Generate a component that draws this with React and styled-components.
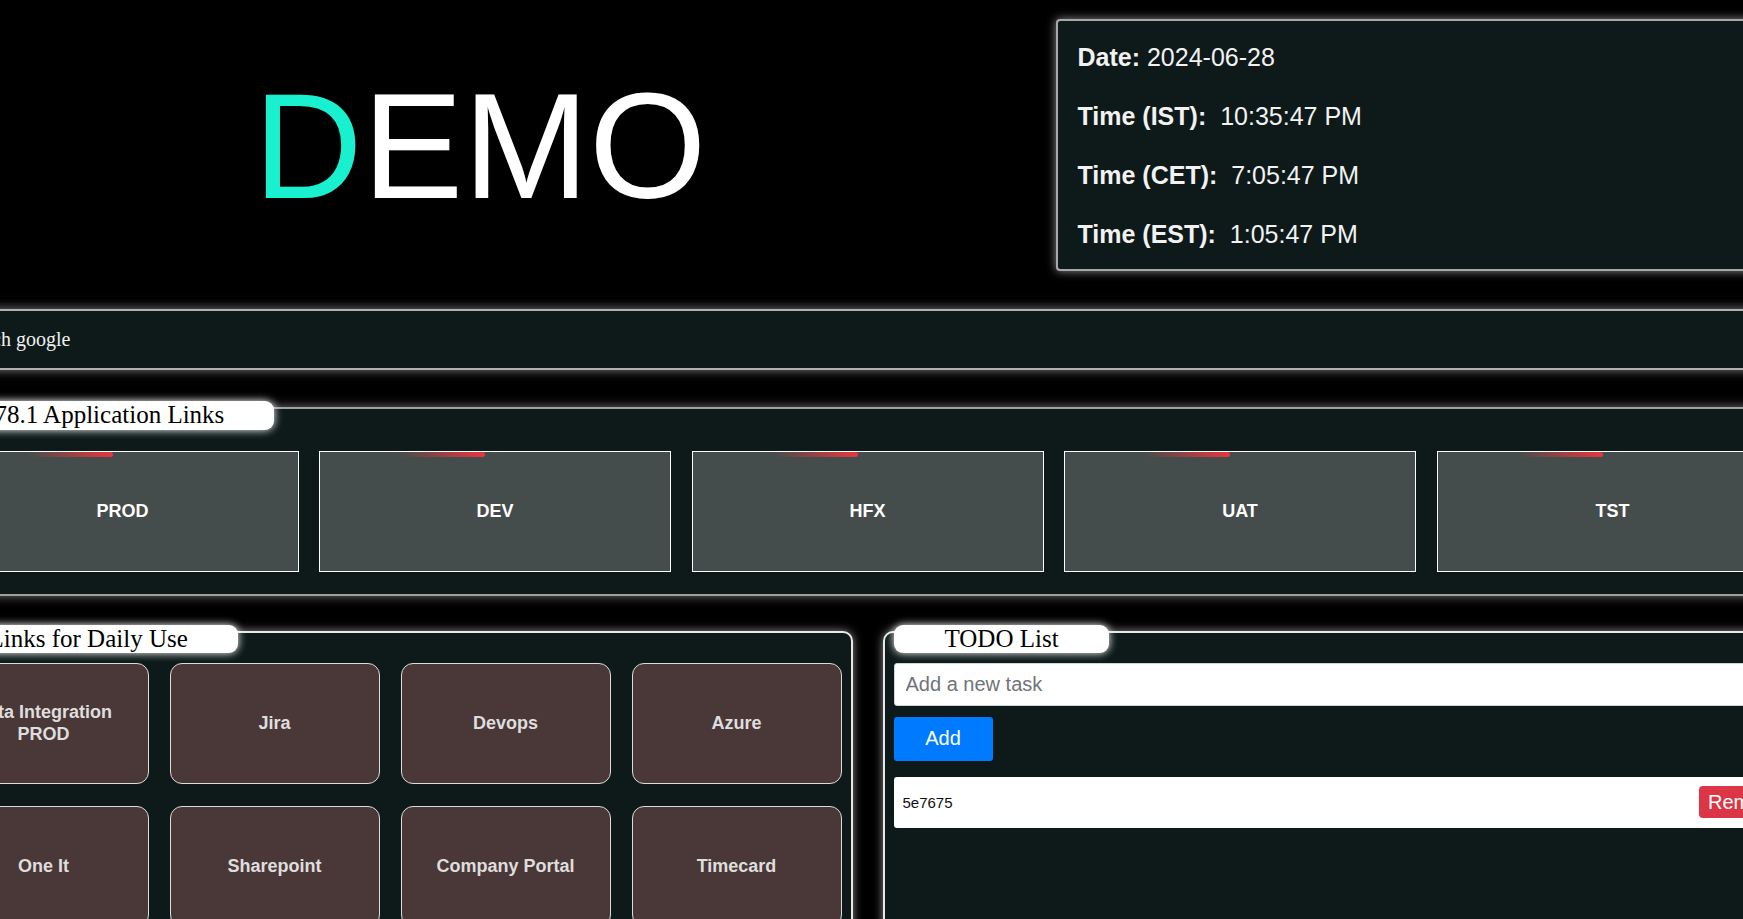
import React, { useState } from 'react';
import styled, { createGlobalStyle } from 'styled-components';

const GlobalStyle = createGlobalStyle`
body {
  margin: 0;
  background: #000;
  overflow-x: hidden;
  font-family: "Liberation Serif", serif;
}
`;

const Viewport = styled.div`
width: 100%;
display: flex;
justify-content: center;
overflow: hidden;
`;

const Page = styled.div`
width: 1888px;
flex-shrink: 0;
padding-top: 19px;
padding-bottom: 40px;
`;

const Header = styled.header`
display: grid;
grid-template-columns: 1105px 1fr;
column-gap: 23px;
align-items: center;
`;

const Title = styled.h1`
margin: 0;
text-align: center;
font-family: "Liberation Sans", Arial, sans-serif;
font-weight: 400;
font-size: 151px;
line-height: 1;
color: #fff;
`;

const Accent = styled.span`
color: #19f0d0;
`;

const Clock = styled.div`
background: #0e1a1a;
border: 2px solid #a8a8a8;
border-right: none;
border-radius: 4px 0 0 4px;
box-shadow: 0 0 10px rgba(255, 255, 255, 0.55);
padding: 22px 20px 21px;
display: flex;
flex-direction: column;
gap: 31px;
font-family: "Liberation Sans", Arial, sans-serif;
font-size: 25px;
color: #f2f2f2;
`;

const ClockRow = styled.div`
height: 28px;
line-height: 28px;
white-space: pre;
`;

const Label = styled.b`
font-weight: 700;
`;

const SearchBar = styled.div`
margin-top: 38px;
height: 57px;
display: flex;
align-items: center;
padding-left: 29px;
background: #0e1a1a;
border-top: 2px solid #b0b0b0;
border-bottom: 2px solid #b0b0b0;
box-shadow: 0 0 10px rgba(255, 255, 255, 0.5);
font-size: 20px;
color: #f0f0f0;
`;

const AppSection = styled.section`
margin-top: 37px;
padding: 0 19px 22px;
background: #0e1a1a;
border-top: 2px solid #a0a0a0;
border-bottom: 2px solid #a0a0a0;
box-shadow: 0 0 10px rgba(255, 255, 255, 0.45);
`;

const Legend = styled.div`
display: inline-flex;
align-items: center;
height: ${p => p.$h || 28}px;
margin: ${p => p.$top}px 0 ${p => p.$bottom}px ${p => p.$left}px;
padding: 0 50px 0 51px;
background: #fff;
border-radius: 9px;
box-shadow: 0 0 9px #fff;
font-family: "Liberation Serif", serif;
font-size: 25px;
color: #000;
white-space: nowrap;
`;

const CardRow = styled.div`
display: grid;
grid-template-columns: repeat(5, 352px);
gap: 20.5px;
`;

const EnvCard = styled.a`
position: relative;
height: 121px;
display: flex;
align-items: center;
justify-content: center;
background: #454d4c;
border: 1px solid #fff;
box-sizing: border-box;
font-family: "Liberation Sans", Arial, sans-serif;
font-weight: 700;
font-size: 18px;
color: #fff;
text-decoration: none;

&::before {
  content: '';
  position: absolute;
  top: 0;
  left: 80px;
  width: 85px;
  height: 5px;
  border-radius: 0 3px 3px 0;
  background: linear-gradient(to right, rgba(232, 58, 63, 0), #e8373c);
}
`;

const Lower = styled.div`
margin-top: 35px;
display: grid;
grid-template-columns: 925px 1fr;
column-gap: 30px;
`;

const Panel = styled.div`
min-height: 420px;
padding: 0 9px 10px;
background: #0e1a1a;
border: 2px solid #e8e8e8;
border-radius: 10px;
box-shadow: 0 0 10px rgba(255, 255, 255, 0.55);
`;

const TileGrid = styled.div`
display: grid;
grid-template-columns: repeat(4, 1fr);
gap: 22px 21px;
`;

const Tile = styled.a`
height: 121px;
display: flex;
align-items: center;
justify-content: center;
padding: 0 15px;
box-sizing: border-box;
text-align: center;
background: #4a3737;
border: 1px solid #dcdcdc;
border-radius: 12px;
font-family: "Liberation Sans", Arial, sans-serif;
font-weight: 700;
font-size: 18px;
line-height: 22px;
color: #dedede;
text-decoration: none;
`;

const TaskInput = styled.input`
display: block;
width: 100%;
height: 43px;
box-sizing: border-box;
padding: 0 11px;
border: 1px solid #ced4da;
border-radius: 3px;
background: #fff;
font-family: "Liberation Sans", Arial, sans-serif;
font-size: 20px;
outline: none;

&::placeholder {
  color: #6f7479;
}
`;

const AddButton = styled.button`
display: block;
margin-top: 11px;
width: 99px;
height: 44px;
border: none;
border-radius: 3px;
background: #007bff;
color: #fff;
font-family: "Liberation Sans", Arial, sans-serif;
font-size: 20px;
cursor: pointer;
`;

const TaskItem = styled.div`
margin-top: 16px;
height: 51px;
display: flex;
align-items: center;
justify-content: space-between;
padding: 0 13px 0 9px;
background: #fff;
border-radius: 3px;
`;

const TaskText = styled.span`
font-family: "Liberation Sans", Arial, sans-serif;
font-size: 15px;
color: #111;
`;

const RemoveButton = styled.button`
height: 32px;
padding: 0 9px;
border: none;
border-radius: 4px;
background: #dc3545;
color: #fff;
font-family: "Liberation Sans", Arial, sans-serif;
font-size: 20px;
cursor: pointer;
`;

const envs = ['PROD', 'DEV', 'HFX', 'UAT', 'TST'];

const daily = [
  'Data Integration PROD', 'Jira', 'Devops', 'Azure',
  'One It', 'Sharepoint', 'Company Portal', 'Timecard',
];

const App = () => {
  const [task, setTask] = useState('');
  const [tasks, setTasks] = useState(['5e7675']);

  const handleAdd = () => {
    if (!task.trim()) return;
    setTasks([...tasks, task.trim()]);
    setTask('');
  };

  const handleRemove = (i) => {
    setTasks(tasks.filter((_, idx) => idx !== i));
  };

  return (
    <Viewport>
      <GlobalStyle />
      <Page>
        <Header>
          <Title><Accent>D</Accent>EMO</Title>
          <Clock>
            <ClockRow><Label>Date:</Label> 2024-06-28</ClockRow>
            <ClockRow><Label>Time (IST):</Label>{'  '}10:35:47 PM</ClockRow>
            <ClockRow><Label>Time (CET):</Label>{'  '}7:05:47 PM</ClockRow>
            <ClockRow><Label>Time (EST):</Label>{'  '}1:05:47 PM</ClockRow>
          </Clock>
        </Header>

        <SearchBar>Search google</SearchBar>

        <AppSection>
          <Legend $top={-10} $bottom={21} $left={-3} $h={29}>78.1 Application Links</Legend>
          <CardRow>
            {envs.map(e => <EnvCard key={e} href="#">{e}</EnvCard>)}
          </CardRow>
        </AppSection>

        <Lower>
          <Panel>
            <Legend $top={-11} $bottom={10} $left={-1}>Links for Daily Use</Legend>
            <TileGrid>
              {daily.map(d => <Tile key={d} href="#">{d}</Tile>)}
            </TileGrid>
          </Panel>
          <Panel>
            <Legend $top={-11} $bottom={10} $left={0}>TODO List</Legend>
            <TaskInput
              placeholder="Add a new task"
              value={task}
              onChange={e => setTask(e.target.value)}
            />
            <AddButton onClick={handleAdd}>Add</AddButton>
            {tasks.map((t, i) => (
              <TaskItem key={i}>
                <TaskText>{t}</TaskText>
                <RemoveButton onClick={() => handleRemove(i)}>Remove</RemoveButton>
              </TaskItem>
            ))}
          </Panel>
        </Lower>
      </Page>
    </Viewport>
  );
};

export default App;
